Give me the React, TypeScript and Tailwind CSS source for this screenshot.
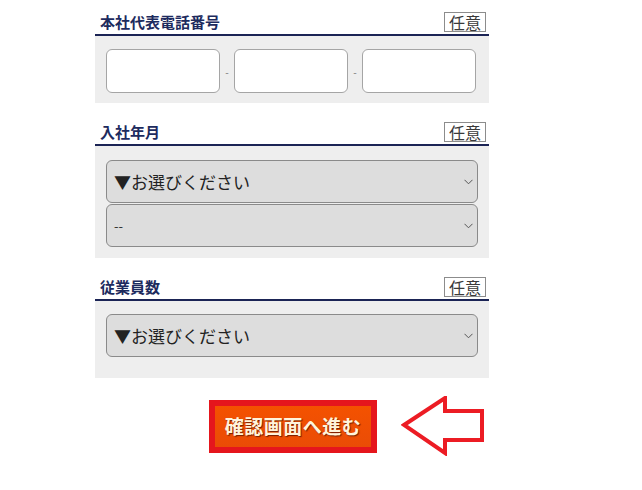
import React from "react";

const jp = { fontFamily: '"Noto Sans CJK JP", "Noto Sans", sans-serif' };

function Header({ title }: { title: string }) {
  return (
    <div className="flex items-end justify-between border-b-2 border-[#1b2455] pb-[2px]">
      <span className="pl-[5px] text-[15px] font-bold leading-[20px] text-[#1d2b5e]">{title}</span>
      <span className="mr-[3px] flex h-[20px] w-[42px] items-center justify-center border border-[#8c8c8c] bg-white text-[16px] leading-none text-[#3a3a3a]">
        任意
      </span>
    </div>
  );
}

function Chevron() {
  return (
    <svg width="9" height="6" viewBox="0 0 9 6" className="shrink-0">
      <path d="M0.5 0.8 L4.5 4.8 L8.5 0.8" fill="none" stroke="#555" strokeWidth="1" />
    </svg>
  );
}

function Select({ text, small }: { text: string; small?: boolean }) {
  return (
    <div className="flex h-[43px] items-center justify-between rounded-[6px] border border-[#8a8a8a] bg-[#dddddd] pl-[7px] pr-[4px]">
      <span className={small ? "text-[13px] text-[#333]" : "text-[17px] text-[#222]"}>{text}</span>
      <Chevron />
    </div>
  );
}

export default function App() {
  return (
    <div className="min-h-[490px] w-[642px] bg-white pt-[12px]" style={jp}>
      <div className="ml-[95px] w-[394px]">
        {/* Section 1 */}
        <Header title="本社代表電話番号" />
        <div className="bg-[#eeeeee] pb-[10px] pl-[11px] pr-[13px] pt-[13px]">
          <div className="flex items-center">
            <div className="h-[44px] w-[114px] rounded-[6px] border border-[#a5a5a5] bg-white" />
            <span className="w-[14px] text-center text-[10px] text-[#777]">-</span>
            <div className="h-[44px] w-[114px] rounded-[6px] border border-[#a5a5a5] bg-white" />
            <span className="w-[14px] text-center text-[10px] text-[#777]">-</span>
            <div className="h-[44px] w-[114px] rounded-[6px] border border-[#a5a5a5] bg-white" />
          </div>
        </div>

        {/* Section 2 */}
        <div className="mt-[19px]">
          <Header title="入社年月" />
          <div className="flex flex-col gap-[1px] bg-[#eeeeee] pb-[11px] pl-[11px] pr-[11px] pt-[14px]">
            <Select text="▼お選びください" />
            <Select text="--" small />
          </div>
        </div>

        {/* Section 3 */}
        <div className="mt-[19px]">
          <Header title="従業員数" />
          <div className="bg-[#eeeeee] pb-[21px] pl-[11px] pr-[11px] pt-[13px]">
            <Select text="▼お選びください" />
          </div>
        </div>
      </div>

      {/* Button row */}
      <div className="mt-[18px] flex items-center">
        <div className="ml-[209px] flex h-[53px] w-[168px] items-center justify-center border-[6px] border-[#e5161d] bg-gradient-to-b from-[#f45200] to-[#ea4c06]">
          <span className="text-[19px] font-bold tracking-[0.5px] text-[#fff4dc] [text-shadow:1px_1px_1px_rgba(90,20,0,0.8)]">
            確認画面へ進む
          </span>
        </div>
        <svg width="84" height="60" viewBox="0 0 84 60" className="ml-[24px]">
          <path
            d="M3 29 L44 2 L44 15 L81 15 L81 44 L44 44 L44 57 Z"
            fill="white"
            stroke="#ec1c24"
            strokeWidth="4"
            strokeLinejoin="miter"
          />
        </svg>
      </div>
    </div>
  );
}
